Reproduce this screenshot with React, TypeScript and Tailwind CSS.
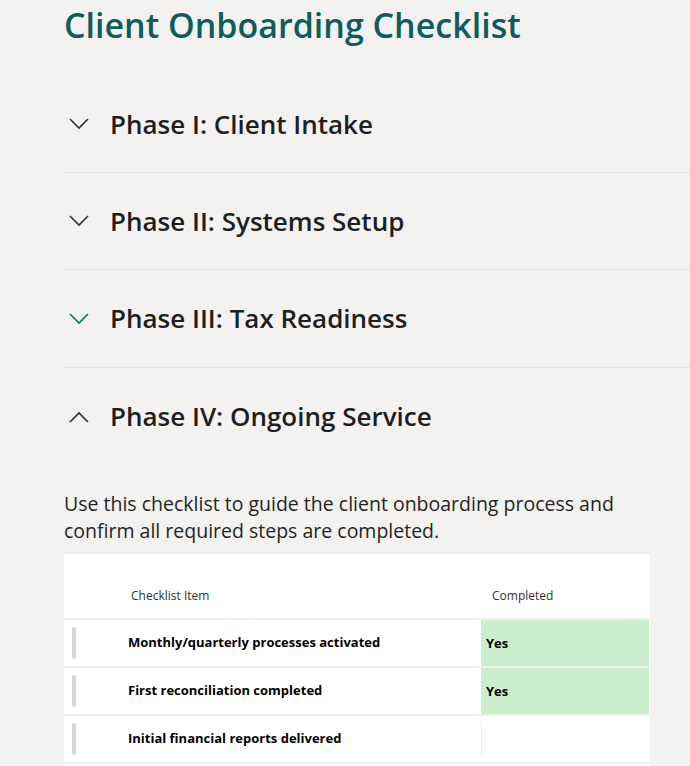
import React, { useState } from 'react';

type Row = { item: string; done: string };

const phases = [
  'Phase I: Client Intake',
  'Phase II: Systems Setup',
  'Phase III: Tax Readiness',
  'Phase IV: Ongoing Service',
];

const rows: Row[] = [
  { item: 'Monthly/quarterly processes activated', done: 'Yes' },
  { item: 'First reconciliation completed', done: 'Yes' },
  { item: 'Initial financial reports delivered', done: '' },
];

const Chevron: React.FC<{ up?: boolean; className?: string }> = ({ up, className }) => (
  <svg width="20" height="12" viewBox="0 0 20 12" className={className}>
    <path
      d={up ? 'M1 11 L10 2 L19 11' : 'M1 1 L10 10 L19 1'}
      fill="none"
      stroke="currentColor"
      strokeWidth="1.6"
    />
  </svg>
);

const ChecklistTable: React.FC = () => (
  <div className="mt-[10px] mr-[40px] bg-white">
    <div className="flex h-[64px] items-end pb-[13px] text-[12px] text-[#323130]">
      <div className="w-[417px] pl-[67px]">Checklist Item</div>
      <div className="pl-[11px]">Completed</div>
    </div>
    {rows.map((r) => (
      <div key={r.item} className="flex h-[48px] border-t-2 border-[#f0efee]">
        <div className="flex w-[417px] items-center">
          <div className="ml-[8px] h-[32px] w-[4px] rounded-full bg-[#d6d4d2]" />
          <div className="ml-[52px] text-[13px] font-bold text-black">{r.item}</div>
        </div>
        <div
          className={
            r.done
              ? 'mr-[1px] flex flex-1 items-center bg-[#cbefcd] pl-[5px] pt-[2px] text-[13px] font-bold text-black'
              : 'my-[6px] mr-[1px] flex-1 border-l border-[#eeeeee]'
          }
        >
          {r.done}
        </div>
      </div>
    ))}
    <div className="h-[24px] border-t-2 border-[#f0efee]" />
  </div>
);

export default function App() {
  const [open, setOpen] = useState(3);

  return (
    <div className="min-h-screen overflow-hidden bg-[#f3f2f1] pl-16 font-['Segoe_UI','Open_Sans',sans-serif]">
      <h1 className="pt-[2px] text-[34px] font-semibold leading-[46px] text-[#0e5c5c]">
        Client Onboarding Checklist
      </h1>
      <div className="mt-[28px]">
        {phases.map((p, i) => (
          <div key={p}>
            <button
              onClick={() => setOpen(open === i ? -1 : i)}
              className={
                'flex w-full items-center text-left ' +
                (i === 2 ? 'h-[98px] ' : 'h-[97px] ') +
                (i === phases.length - 1 ? '' : 'border-b border-[#e4e2e0]')
              }
            >
              <Chevron
                up={open === i}
                className={'ml-[5px] ' + (i === 2 ? 'text-[#0f7070]' : 'text-[#323130]')}
              />
              <span className="ml-[21px] text-[26px] font-semibold text-[#201f1e]">{p}</span>
            </button>
            {open === i && (
              <div className="pt-[25px]">
                <p className="pr-[40px] text-[19.5px] leading-[27px] text-[#252423]">
                  Use this checklist to guide the client onboarding process and confirm all
                  required steps are completed.
                </p>
                <ChecklistTable />
              </div>
            )}
          </div>
        ))}
      </div>
    </div>
  );
}
